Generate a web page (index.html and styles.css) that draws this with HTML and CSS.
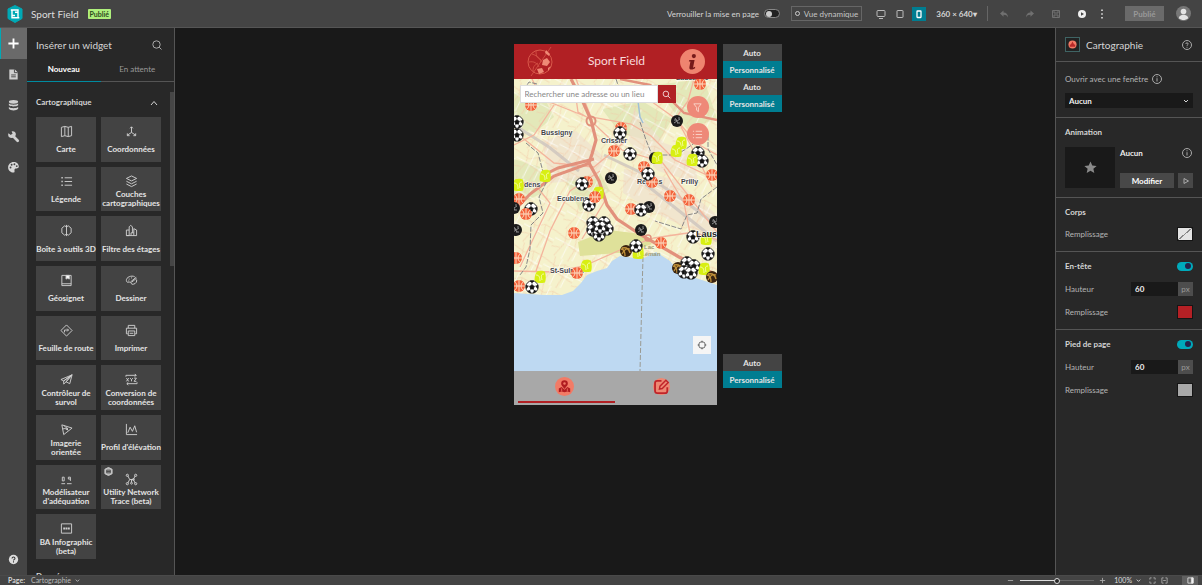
FILE: index.html
```html
<!DOCTYPE html>
<html lang="fr">
<head>
<meta charset="utf-8">
<title>Sport Field</title>
<link rel="stylesheet" href="styles.css">
</head>
<body>
<header class="topbar">
  <svg class="logo" viewBox="0 0 16 18"><path d="M8 0.5l7 3.5v9.500l-7 4-7-4V4z" fill="#00a9b5" stroke="#00a9b5" stroke-linejoin="round"/><path d="M3.800 5H11v4.500M12.300 12.800H5V8M5 5v5.500h3M11 12.800V7.300H8" fill="none" stroke="#fff" stroke-width="1.400"/></svg>
  <h1 class="app-name">Sport Field</h1>
  <span class="badge">Publié</span>
  <label class="lock">Verrouiller la mise en page<input class="switch switch-off" type="checkbox"></label>
  <button class="live"><span class="ring"></span>Vue dynamique</button>
  <div class="devices">
    <button class="tool" aria-label="Ordinateur"><svg viewBox="0 0 14 14"><rect x="3" y="3.500" width="8" height="6" rx="1"/><path d="M5 11.500h4"/></svg></button>
    <button class="tool" aria-label="Tablette"><svg viewBox="0 0 14 14"><rect x="4" y="3.500" width="6" height="7" rx="0.500"/></svg></button>
    <button class="tool tool-on" aria-label="Téléphone"><svg viewBox="0 0 14 14"><rect x="5" y="4" width="4" height="6.500" rx="0.500" stroke-width="1.300"/></svg></button>
  </div>
  <button class="size">360 × 640▾</button>
  <span class="divider"></span>
  <div class="actions">
    <button class="tool dim" aria-label="Annuler"><svg viewBox="0 0 14 14"><path class="solid" d="M3 6.500L6.500 3.500v2C9.500 5.500 11 7.500 11 10.500 10 8.500 9 7.800 6.500 7.800v2z"/></svg></button>
    <button class="tool dim" aria-label="Rétablir"><svg viewBox="0 0 14 14"><path class="solid" d="M11 6.500L7.500 3.500v2C4.500 5.500 3 7.500 3 10.500 4 8.500 5 7.800 7.500 7.800v2z"/></svg></button>
    <button class="tool dim" aria-label="Enregistrer"><svg viewBox="0 0 14 14"><path d="M3.500 3.500h7v7h-7zM5 3.500v2.500h4V3.500M5 10.500V8h4v2.500"/></svg></button>
    <button class="tool" aria-label="Aperçu"><svg viewBox="0 0 14 14"><circle cx="7" cy="7" r="4" fill="#f0f0f0" stroke="none"/><path d="M6 5.200v3.600L9 7z" fill="#444" stroke="none"/></svg></button>
  </div>
  <button class="tool more" aria-label="Plus"><svg viewBox="0 0 14 14"><path class="solid" d="M6.200 2.500h1.600v1.600H6.200zM6.200 6.200h1.600v1.600H6.200zM6.200 9.900h1.600v1.600H6.200z"/></svg></button>
  <button class="publish">Publié</button>
  <svg class="avatar" viewBox="0 0 16 16"><circle cx="8" cy="8" r="8" fill="#777"/><circle cx="8" cy="5.800" r="3" fill="#e4e4e4"/><path d="M3 13c0-5 10-5 10 0-3 2.500-7 2.500-10 0z" fill="#e4e4e4"/></svg>
</header>

<main class="workspace">
  <nav class="rail">
    <button class="rail-item rail-on" aria-label="Insérer"><svg viewBox="0 0 14 14"><path d="M7 1.500v11M1.500 7h11" stroke="#fff" stroke-width="2"/></svg></button>
    <button class="rail-item" aria-label="Page"><svg viewBox="0 0 14 14"><path d="M2.500 1.500h6l3 3v8h-9z" fill="#d0d0d0"/><path d="M8 1.500V5h3.500M4.500 7.500h5M4.500 9.500h5" fill="none" stroke="#444"/></svg></button>
    <button class="rail-item" aria-label="Données"><svg viewBox="0 0 14 14"><ellipse cx="7" cy="3" rx="5" ry="2" fill="#d0d0d0"/><path d="M2 4.800c2 1.700 8 1.700 10 0v2c-2 1.700-8 1.700-10 0zM2 8.600c2 1.700 8 1.700 10 0v2c-2 2.200-8 2.200-10 0z" fill="#d0d0d0"/></svg></button>
    <button class="rail-item" aria-label="Utilitaires"><svg viewBox="0 0 14 14"><path d="M6 6l5.500 5.500" stroke="#d0d0d0" stroke-width="3" stroke-linecap="round"/><path d="M1.500 3.500l2.700 1.800L6 4 5 1.500c3-.5 5 1.500 4.500 4-1.500 3.500-5 4-7.500 2-.8-1.500-.9-2.500-.5-4z" fill="#d0d0d0"/></svg></button>
    <button class="rail-item" aria-label="Thème"><svg viewBox="0 0 14 14"><path d="M7 1c3.500 0 5.700 2.200 5.700 5 0 2.500-3 2-4 2.300-1.500.7 0 2.500-.7 3.700C5 13.500 1.200 10.500 1.200 7S4 1 7 1z" fill="#d8d8d8"/><g fill="#444"><circle cx="3.800" cy="7" r="1"/><circle cx="5" cy="4" r="1"/><circle cx="8" cy="3.500" r="1"/><circle cx="10.500" cy="5.500" r="1"/></g></svg></button>
    <button class="rail-item rail-help" aria-label="Aide"><svg viewBox="0 0 14 14"><circle cx="7" cy="7" r="5" fill="#ddd"/><path d="M5.400 5.800c0-2 3.200-2 3.200 0 0 1.200-1.600 1-1.600 2.400M7 9v1.200" fill="none" stroke="#333" stroke-width="1.100"/></svg></button>
  </nav>

  <aside class="widgets">
    <div class="widgets-head"><h2 class="panel-title">Insérer un widget</h2>
      <button class="icon-btn" aria-label="Rechercher"><svg viewBox="0 0 12 12"><circle cx="5.500" cy="5.500" r="3.700"/><path d="M8.200 8.200L10.500 10.500"/></svg></button></div>
    <div class="tabs"><button class="tab tab-on">Nouveau</button><button class="tab">En attente</button></div>
    <div class="scroll">
      <span class="thumb"></span>
      <div class="group-head"><h3 class="group-title">Cartographique</h3><svg class="chevron" viewBox="0 0 10 10"><path d="M2 8l3-3.500L8 8"/></svg></div>
      <div class="cards">
        <button class="card"><svg viewBox="0 0 14 14"><path d="M1.500 2.500l3.700-1 3.700 1 3.600-1v10l-3.600 1-3.700-1-3.700 1zM5.200 1.500v10M8.900 2.500v10"/></svg><span>Carte</span></button>
        <button class="card"><svg viewBox="0 0 14 14"><path d="M7 8V2M5.500 3.500L7 2l1.500 1.500M7 8l-4.500 3M7 8l4.500 3M2.500 9v2.500H5M11.500 9v2.500H9"/></svg><span>Coordonnées</span></button>
        <button class="card"><svg viewBox="0 0 14 14"><path d="M5 3h8M5 7h8M5 11h8"/><path d="M1.500 3H3M1.500 7H3M1.500 11H3" stroke-width="1.600"/></svg><span>Légende</span></button>
        <button class="card"><svg viewBox="0 0 14 14"><path d="M7 1l5.500 2.700L7 6.400 1.500 3.700zM1.500 6.700L7 9.500l5.500-2.800M1.500 9.700L7 12.500l5.500-2.800"/></svg><span>Couches cartographiques</span></button>
        <button class="card"><svg viewBox="0 0 14 14"><path d="M5 2L2 4.500v5L5 12M9 2l3 2.500v5L9 12M7 1v12M5 2l2 1 2-1M5 12l2-1 2 1"/></svg><span>Boîte à outils 3D</span></button>
        <button class="card"><svg viewBox="0 0 14 14"><path d="M1.500 12.500v-6h3v6zM4.500 6.500V3L6 1.500 8 3v6.500M6.500 12.500v-3h3v3M9.500 9.500V5l3 1.500v6h-11"/></svg><span>Filtre des étages</span></button>
        <button class="card"><svg viewBox="0 0 14 14"><path d="M2 1.500h10v11H2zM2 10.500h10"/><path d="M6.500 1.500h3.500v4L8.200 4.500 6.500 5.500z" fill="#fff"/></svg><span>Géosignet</span></button>
        <button class="card"><svg viewBox="0 0 14 14"><path d="M10.500 3C7 1 1 3.500 1.500 7c.5 3.500 3 1 4.500 2s0 2.500 3 2 4-3 3.500-5M6 8.500l6-5M7 9l5.500-4.500"/><path d="M4 5.500h1M6.500 4.200h1M3.500 7.500h1"/></svg><span>Dessiner</span></button>
        <button class="card"><svg viewBox="0 0 14 14"><path d="M7 1l6 6-6 6-6-6zM4.800 9V6.500H9M7.700 5L9.200 6.500 7.700 8"/></svg><span>Feuille de route</span></button>
        <button class="card"><svg viewBox="0 0 14 14"><path d="M3.500 4.500v-3h7v3M3 10.500H1.500v-6h11v6H11M3.500 7.500h7v5h-7zM5 10h4"/></svg><span>Imprimer</span></button>
        <button class="card"><svg viewBox="0 0 14 14"><path d="M13 2L1 7l3 1.500zM13 2L4 8.500V12l2.500-2.500M13 2l-2.500 9.500-4-2zM13 2L6.500 9.500"/></svg><span>Contrôleur de survol</span></button>
        <button class="card"><svg viewBox="0 0 14 14"><path d="M1 4V2.500h11M10.500 1L12 2.500 10.500 4M13 10v1.500H2M3.500 10L2 11.500 3.500 13M1.500 5.500l2.500 3.500M4 5.500L1.500 9M5.500 5.500L7 7.200l1.500-1.700M7 7.200V9M9.800 5.500h2.500L9.800 9h2.500"/></svg><span>Conversion de coordonnées</span></button>
        <button class="card"><svg viewBox="0 0 14 14"><path d="M2 2l11 3.500L4 12.500zM3 6.500c2-1 3.500-.5 4.500 1M4.500 3c1.500 1 3 2.500 4 5M6 5.500h2v2"/></svg><span>Imagerie<br>orientée</span></button>
        <button class="card"><svg viewBox="0 0 14 14"><path d="M1.500 1v11.500H13M3 10.500l2.500-6L8 9l2.500-6 2 7"/></svg><span>Profil d'élévation</span></button>
        <button class="card"><svg viewBox="0 0 14 14"><path d="M1.500 11.500h4M7.500 11.500h5M2.500 4.500h2v4h-2zM9 6.500v-2h2.200v4M9 6.500h2.200"/></svg><span>Modélisateur d'adéquation</span></button>
        <button class="card"><svg class="mark" viewBox="0 0 10 10"><path d="M5 .5l4 2v5l-4 2-4-2v-5z" fill="#bbb"/><path d="M3 3.500h4v3H3zM3 5h4" stroke="#444"/></svg><svg viewBox="0 0 14 14"><path d="M3 3l2 4-2 4M5 7h4l2-4M9 7l2 4M7 7v3"/><g><circle cx="2.500" cy="2.500" r="1.200"/><circle cx="11.500" cy="2.500" r="1.200"/><circle cx="2.500" cy="11.500" r="1.200"/><circle cx="11.500" cy="11.500" r="1.200"/><circle cx="7" cy="11" r="1"/><circle cx="9" cy="7" r="1"/></g></svg><span>Utility Network Trace (beta)</span></button>
        <button class="card"><svg viewBox="0 0 14 14"><path d="M1.500 2h11v10h-11z"/><path d="M3.500 7h7" stroke-width="2.200" stroke-dasharray="2 .5"/></svg><span>BA Infographic (beta)</span></button>
      </div>
      <h3 class="group-title next-group">Données</h3>
    </div>
  </aside>

  <section class="canvas">
    <div class="phone">
      <div class="phone-head">
        <svg class="sport-logo" viewBox="0 0 28 32"><g fill="none" stroke="#d8584a"><circle cx="14" cy="16" r="12"/><path d="M5 30L25 1M6 8c6 2 9 5 9 8M3 16c5-1 8 1 10 5M10 5c0 5 1 7 5 9M7 25c0-5 2-6 5-8" stroke-width=".8"/></g><path d="M17 14l4-2 3 4-3 4-5-1zM20 4l4 4-1 2-4-3zM11 23l5-1 2 4-5 2zM22 22l3-2-3 5z" fill="#ef8a76"/></svg>
        <h2 class="phone-title">Sport Field</h2>
        <button class="info" aria-label="Informations"><svg viewBox="0 0 24 24"><circle cx="12" cy="12" r="12" fill="#ef8470"/><circle cx="13.300" cy="6.800" r="2" fill="#761a1a"/><path d="M9 10.500h5l-1.500 7.500 2-1v1.500c-3 2-6 1.500-5.500-1L10 12H8.500z" fill="#761a1a"/></svg></button>
      </div>
      <div class="map">
        <svg class="map-art" viewBox="0 0 203 292" preserveAspectRatio="xMidYMid slice">
          <defs>
            <pattern id="streets" width="34" height="29" patternUnits="userSpaceOnUse" patternTransform="rotate(24)"><path d="M0 6l12 3 8-5 14 2M8 0l3 13-5 16M20 4l3 12 11 2M11 13l12 3-2 13M0 21l8-2" fill="none" stroke="#f3c3a2" stroke-width=".8" opacity=".6"/><path d="M0 12l34 3M16 0l-2 29M27 5l-2 22" fill="none" stroke="#fff" stroke-width=".9" opacity=".7"/></pattern>
            <g id="soccer"><circle r="6.200" fill="#fff" stroke="#222" stroke-width=".9"/><path d="M0-2.200L2.200-.6 1.300 2h-2.600L-2.200-.6zM-1.800-6h3.600L0-4.300zM5.900-2L5.500 1.500 4-.8zM4.300 4.300L1.500 5.900 2.300 3.400zM-4.300 4.300L-1.500 5.900-2.300 3.400zM-5.900-2L-5.500 1.500-4-.8z" fill="#111" stroke="#111" stroke-width=".8"/><path d="M0-2v-2M2-.6l2-.5M1.300 2l1.200 2M-1.300 2l-1.200 2M-2-.6l-2-.5" stroke="#111" stroke-width=".5"/></g>
            <g id="basket"><circle r="6" fill="#f4633c"/><path d="M-6 0H6M0-6V6M-4.300-4.200c3 2.500 3 6 0 8.400M4.300-4.200c-3 2.500-3 6 0 8.400" fill="none" stroke="#fde7cc" stroke-width=".9"/></g>
            <g id="tennis"><path d="M-3-5.500C0-7 5-6 5-5c1 4 1 8 0 10.500C1 6.500-3 6-5 5c-1-3 0-8 2-10.500z" fill="#d8ef12"/><path d="M-4-2c3 0 4 2 4 6M4-3C1-3 1-1 2 3" fill="none" stroke="#fbffc8" stroke-width=".8"/></g>
            <g id="puck"><circle r="6" fill="#1b1b1b"/><path d="M-3 2l6-4M-3-1h3M0 2h3M-2-3l3 5M1-3h2" stroke="#999" stroke-width=".9"/></g>
            <g id="volley"><circle r="6" fill="#3a2410"/><path d="M-4-3c4-1 7 1 8 5M-4 3c2-4 5-6 8-5M-1 5c0-4-1-7-4-7" fill="none" stroke="#c0913a" stroke-width="1.300"/></g>
          </defs>
          <path d="M0 0h203v292H0z" fill="#f5f2cc"/>
          <path d="M0 14l30 4 10 20-20 16-20-6zM88 30l40-8 30 18-14 24-38-10zM140 6l50-6 13 40-30 10zM0 80l26 8 2 26-28 14zM50 100l36-6 10 18-30 20z" fill="#e3e8b9"/>
          <path d="M28 62l34-10 30 28-10 20-46 4zM110 90l50 10 43 36v24l-50-20-44-26zM120 30l30 34 30 10 4 30-40-12-30-30z" fill="#eeddcf" opacity=".6"/>
          <path d="M0 0h203v292H0z" fill="url(#streets)"/>
          <path d="M64 163l30-12 34 4 10 10-22 8-50 4z" fill="#dfe19a"/>
          <g fill="none" stroke="#c9c2bc" stroke-width="3" opacity=".75"><path d="M0 46l35 22 30 24M90 76l42 20 40 27 31 24M130 104l73 58"/></g>
          <g fill="none" stroke="#f4b49c" stroke-width="1.300"><path d="M0 192l40 1 30-6 36-16 34-12 40-6 23 8M62 0l7 18 8 20 40 7 20 12 24 24 42 20M78 41l-14-8-2-14M76 41l32 30 40 12 55 70M0 52l40 32 40 4 34-28M104 6l30 14 28 20 20 24 21 12M180 0l-6 22-10 14M0 104l20 0 16 20-30 64M86 92l-30 20-20 40-14 40M40 26l-20 30-20 10M92 120l-24 40M150 90l20 34 6 30M18 0l10 20 50 20M164 42l24 46 10 20"/></g>
          <g fill="none" stroke="#e2917c"><path d="M57 0l12 23 8 18 5 20-4 14-3 9 10 18 8 24 10 14 24 16 38 22 38 18" stroke-width="3.200"/><path d="M76 84l-36 13-24 18-16 17M80 80l-36 9-16 8" stroke-width="3"/><path d="M106 0l30 6 20 14 14 14 33 7" stroke-width="2.400"/><circle cx="77" cy="42" r="4.500" stroke-width="2"/><circle cx="134" cy="159" r="3" stroke-width="1.500"/></g>
          <path d="M23 5l-8-2-4 6M102 0l4 12-5 10M126 43l6 18 6 15 24 0 10-6 14-10 8-4 0 14 9 16M12 64l12 10 8 30-7 14 4 16-12 12-1 24-4 18-6 8M203 108l-16 12-4 14-10 2-6 14-26-8" fill="none" stroke="#888" stroke-width="1" stroke-dasharray="5 1.500"/>
          <path d="M124 22l2 16 3 6" fill="none" stroke="#9fc0d6" stroke-width="1.500"/>
          <path d="M0 214l30 2h18l11-4 8-8 6-8 10-4 10-3 5-7 8-5 22 3 14-7 14 9 10 12 22 7 15 5v87H0z" fill="#bed9f2"/>
          <path d="M129 178l-1 36-2 78" fill="none" stroke="#9a9a92" stroke-dasharray="5 2"/>
          <g class="towns"><text x="27" y="56">Bussigny</text><text x="87" y="64">Crissier</text><text x="10" y="108">dens</text><text x="43" y="122">Ecublens</text><text x="123" y="105">Renens</text><text x="167" y="105">Prilly</text><text x="36" y="194">St-Sulpice</text><text x="162" y="1">Lausanne</text><text class="soft" x="130" y="170">Lac</text><text class="soft" x="127" y="177">Léman</text></g>
          <use href="#soccer" x="3" y="43"/><use href="#soccer" x="3" y="56"/><use href="#basket" x="107" y="49"/><use href="#soccer" x="106" y="54"/><use href="#basket" x="186" y="5"/><use href="#basket" x="100" y="72"/><use href="#soccer" x="116" y="75"/><use href="#basket" x="17" y="26"/><use href="#puck" x="163" y="42"/><use href="#puck" x="141" y="79"/><use href="#tennis" x="143" y="79"/><use href="#tennis" x="167" y="64"/><use href="#tennis" x="162" y="72"/><use href="#soccer" x="184" y="74"/><use href="#soccer" x="188" y="82"/><use href="#tennis" x="178" y="81"/>
          <use href="#tennis" x="31" y="97"/><use href="#tennis" x="4" y="106"/><use href="#basket" x="73" y="103"/><use href="#soccer" x="68" y="105"/><use href="#puck" x="97" y="99"/><use href="#basket" x="130" y="88"/><use href="#basket" x="138" y="103"/><use href="#soccer" x="134" y="95"/><use href="#basket" x="198" y="96"/><use href="#basket" x="156" y="117"/><use href="#basket" x="175" y="121"/><use href="#basket" x="5" y="120"/><use href="#puck" x="0" y="129"/><use href="#soccer" x="17" y="130"/><use href="#basket" x="12" y="135"/><use href="#puck" x="2" y="151"/><use href="#soccer" x="75" y="126"/><use href="#tennis" x="84" y="114"/><use href="#basket" x="81" y="118"/>
          <use href="#soccer" x="79" y="144"/><use href="#soccer" x="90" y="144"/><use href="#soccer" x="93" y="150"/><use href="#soccer" x="79" y="151"/><use href="#soccer" x="85" y="156"/><use href="#soccer" x="86" y="148"/><use href="#basket" x="60" y="154"/><use href="#basket" x="117" y="130"/><use href="#puck" x="135" y="128"/><use href="#soccer" x="127" y="131"/><use href="#puck" x="127" y="151"/><use href="#basket" x="147" y="164"/><use href="#volley" x="112" y="172"/><use href="#tennis" x="124" y="174"/><use href="#soccer" x="122" y="167"/><use href="#puck" x="201" y="143"/><use href="#soccer" x="179" y="158"/><use href="#tennis" x="192" y="160"/><use href="#soccer" x="194" y="175"/><use href="#volley" x="164" y="189"/><use href="#soccer" x="173" y="184"/><use href="#soccer" x="180" y="187"/><use href="#soccer" x="170" y="193"/><use href="#soccer" x="177" y="194"/><use href="#tennis" x="190" y="190"/><use href="#volley" x="198" y="198"/>
          <use href="#basket" x="2" y="179"/><use href="#tennis" x="72" y="187"/><use href="#basket" x="63" y="194"/><use href="#tennis" x="26" y="198"/><use href="#basket" x="5" y="207"/><use href="#soccer" x="18" y="208"/>
          <g class="towns"><text class="city" x="182" y="158">Laus</text></g>
        </svg>
        <div class="map-search"><input class="map-input" type="text" aria-label="Rechercher" placeholder="Rechercher une adresse ou un lieu"><button class="map-go" aria-label="Lancer la recherche"><svg viewBox="0 0 12 12"><circle cx="5.200" cy="5.200" r="3.700"/><path d="M8 8l3 3"/></svg></button></div>
        <div class="map-tools">
          <button class="round" aria-label="Filtre"><svg viewBox="0 0 12 12"><path d="M2 2h8L7 6v4.500L5 9V6z"/></svg></button>
          <button class="round" aria-label="Légende"><svg viewBox="0 0 12 12"><path d="M4 2.500h7M4 6h7M4 9.500h7M1 2.500h1.300M1 6h1.300M1 9.500h1.300"/></svg></button>
        </div>
        <button class="locate" aria-label="Ma position"><svg viewBox="0 0 12 12"><circle cx="6" cy="6" r="4"/><path d="M6 .8v2.400M6 8.800v2.400M.8 6h2.400M8.800 6h2.400"/></svg></button>
      </div>
      <div class="phone-foot">
        <button class="foot-tab foot-on" aria-label="Carte"><svg viewBox="0 0 20 20"><circle cx="10" cy="10" r="10" fill="#f27b66"/><path d="M10 12.500C7.500 9.500 6.500 8.500 6.500 6.800a3.500 3.500 0 017 0c0 1.700-1 2.700-3.500 5.700z" fill="#b01c20"/><circle cx="10" cy="6.800" r="1.300" fill="#f27b66"/><path d="M4 12l3-1.500 3 3 3-3 3 1.500v4l-3-.8-3 .8-3-.8-3 .8z" fill="#b01c20"/><path d="M7 12v3M13 12v3" stroke="#f27b66" stroke-width=".8"/></svg></button>
        <button class="foot-tab" aria-label="Modifier"><svg viewBox="0 0 20 20"><circle cx="10" cy="10" r="9" fill="#ee8873"/><path d="M10 4H5.500a2.300 2.300 0 00-2.300 2.300v8.500A2.300 2.300 0 005.500 17h8.300a2.300 2.300 0 002.300-2.300v-4" fill="none" stroke="#c0242a" stroke-width="1.900"/><path d="M7.800 12.700l.6-3 6.200-6.300 2.500 2.500-6.300 6.200z" fill="#ee8873" stroke="#c0242a" stroke-width="1.500"/></svg></button>
      </div>
    </div>
    <div class="modes">
      <div class="mode-group"><button class="mode">Auto</button><button class="mode mode-on">Personnalisé</button><button class="mode">Auto</button><button class="mode mode-on">Personnalisé</button></div>
      <div class="mode-group"><button class="mode">Auto</button><button class="mode mode-on">Personnalisé</button></div>
    </div>
  </section>

  <aside class="settings">
    <div class="settings-head">
      <span class="page-icon"><svg viewBox="0 0 10 10"><circle cx="5" cy="5" r="4.500" fill="#f27b66"/><path d="M5 1.800L6.800 5H8v2.500H2V5h1.200z" fill="#b82a2a"/></svg></span>
      <h2 class="panel-title grow">Cartographie</h2>
      <button class="icon-btn" aria-label="Aide"><svg viewBox="0 0 12 12"><circle cx="6" cy="6" r="4.500"/><path d="M4.800 5c0-1.600 2.400-1.600 2.400 0 0 .8-1.200.7-1.200 1.800M6 7.800v.9"/></svg></button>
    </div>
    <div class="block">
      <div class="row row-start"><label class="label" for="open">Ouvrir avec une fenêtre</label><svg class="info-mark" viewBox="0 0 12 12"><circle cx="6" cy="6" r="4.500"/><path d="M6 5.200v3.300M6 3.300v1"/></svg></div>
      <div class="select-wrap"><select class="select" id="open"><option>Aucun</option></select><svg class="caret" viewBox="0 0 8 8"><path d="M2 3l2 2 2-2"/></svg></div>
    </div>
    <div class="block">
      <h3 class="sub">Animation</h3>
      <div class="anim">
        <div class="anim-thumb"><svg viewBox="0 0 14 14"><path d="M7 .5l1.900 4.300 4.700.5-3.500 3.100 1 4.600L7 10.600 2.900 13l1-4.600L.4 5.300l4.700-.5z" fill="#8a8a8a"/></svg></div>
        <div class="anim-side">
          <div class="row anim-name"><span>Aucun</span><svg class="info-mark" viewBox="0 0 12 12"><circle cx="6" cy="6" r="4.500"/><path d="M6 5.200v3.300M6 3.300v1"/></svg></div>
          <div class="anim-actions"><button class="btn grow">Modifier</button><button class="btn btn-play" aria-label="Lire"><svg viewBox="0 0 8 8"><path d="M2 1.500v5L6.500 4z"/></svg></button></div>
        </div>
      </div>
    </div>
    <div class="block">
      <h3 class="sub">Corps</h3>
      <div class="row line"><span class="label">Remplissage</span><button class="swatch swatch-none" aria-label="Remplissage du corps"></button></div>
    </div>
    <div class="block">
      <div class="row sub-row"><label class="sub" for="head-on">En-tête</label><input class="switch" id="head-on" type="checkbox" checked></div>
      <div class="row line"><label class="label" for="head-h">Hauteur</label><span class="num"><input class="num-input" id="head-h" type="text" value="60"><span class="unit">px</span></span></div>
      <div class="row line"><span class="label">Remplissage</span><button class="swatch swatch-red" aria-label="Remplissage de l'en-tête"></button></div>
    </div>
    <div class="block block-last">
      <div class="row sub-row"><label class="sub" for="foot-on">Pied de page</label><input class="switch" id="foot-on" type="checkbox" checked></div>
      <div class="row line"><label class="label" for="foot-h">Hauteur</label><span class="num"><input class="num-input" id="foot-h" type="text" value="60"><span class="unit">px</span></span></div>
      <div class="row line"><span class="label">Remplissage</span><button class="swatch swatch-grey" aria-label="Remplissage du pied de page"></button></div>
    </div>
  </aside>
</main>

<footer class="status">
  <span class="status-label">Page:</span>
  <button class="status-page">Cartographie<svg viewBox="0 0 8 8"><path d="M2 3l2 2 2-2"/></svg></button>
  <div class="zoom">
    <button class="mini" aria-label="Réduire"><svg viewBox="0 0 8 8"><path d="M1 4h6"/></svg></button>
    <input class="slider" type="range" aria-label="Zoom" min="0" max="100" value="50">
    <button class="mini" aria-label="Agrandir"><svg viewBox="0 0 8 8"><path d="M1 4h6M4 1v6"/></svg></button>
  </div>
  <button class="percent">100%<svg viewBox="0 0 8 8"><path d="M2 3l2 2 2-2"/></svg></button>
  <button class="mini" aria-label="Ajuster"><svg viewBox="0 0 8 8"><path d="M1 3V1h2M5 1h2v2M7 5v2H5M3 7H1V5"/></svg></button>
  <button class="mini" aria-label="Largeur"><svg viewBox="0 0 8 8"><path d="M3 1H1v6h2M5 1h2v6H5M2.500 4h3"/></svg></button>
  <button class="panel-toggle" aria-label="Volet"><svg viewBox="0 0 8 8"><path d="M1 1h6v6H1z"/><path d="M5 1h2v6H5z" fill="#fff"/></svg></button>
</footer>
</body>
</html>
```
FILE: styles.css
```css
* { box-sizing: border-box; }
body {
  margin: 0; height: 100vh; display: flex; flex-direction: column; overflow: hidden;
  background: #191919; color: #d5d5d5;
  font: 8px/10px Lato, "Open Sans", sans-serif;
}
h1, h2, h3 { margin: 0; font-size: 8px; font-weight: 400; }
button, input, select { font: inherit; color: inherit; margin: 0; padding: 0; border: 0; background: none; border-radius: 0; }
svg { display: block; fill: none; stroke: currentColor; flex: none; }
.solid { fill: currentColor; stroke: none; }
.grow { flex: 1; }

.topbar {
  flex: none; height: 28px; display: flex; align-items: center; padding: 0 11px 0 7px;
  background: #444; border-bottom: 1px solid #555;
}
.logo { width: 16px; height: 18px; stroke: none; }
.app-name { margin-left: 8px; font-size: 10px; line-height: 14px; color: #ddd; }
.badge { margin-left: 9px; width: 23px; background: #aef07c; color: #2b4a1c; border-radius: 1px; font-size: 7px; line-height: 10px; font-weight: 700; text-align: center; }
.lock { margin-left: auto; display: flex; align-items: center; gap: 5px; }
.live { margin-left: 11px; width: 71px; height: 15px; display: flex; align-items: center; justify-content: center; gap: 4px; border: 1px solid #666; color: #c5c5c5; }
.ring { width: 5px; height: 5px; border: 1px solid #ccc; border-radius: 50%; }
.devices { display: flex; gap: 5px; margin-left: 12px; }
.tool { width: 14px; height: 14px; flex: none; color: #bbb; }
.tool svg { width: 14px; height: 14px; }
.tool-on { background: #007d91; color: #fff; }
.size { margin-left: 9px; width: 43px; font-weight: 700; white-space: nowrap; }
.divider { width: 1px; height: 15px; margin: 0 9px; background: #666; }
.actions { display: flex; gap: 12px; }
.dim { color: #707070; }
.more { margin-left: 6px; color: #e0e0e0; }
.publish { margin-left: 16px; width: 39px; height: 15px; background: #6a6a6a; color: #999; font-weight: 700; }
.avatar { margin-left: 12px; width: 15px; height: 15px; stroke: none; }

.switch { appearance: none; flex: none; width: 16px; height: 9px; border-radius: 5px; background: #00aabb; display: flex; align-items: center; justify-content: flex-end; padding: 1px 2px; }
.switch::before { content: ""; width: 6px; height: 6px; border-radius: 50%; background: #23234b; }
.switch-off { background: #222; border: 1px solid #888; justify-content: flex-start; padding: 0 1px; }
.switch-off::before { background: #ccc; }

.workspace { flex: 1; min-height: 0; display: flex; }
.rail { width: 27px; flex: none; display: flex; flex-direction: column; background: #444; }
.rail-item { height: 31px; display: flex; align-items: center; justify-content: center; }
.rail-item svg { width: 13px; height: 13px; stroke: none; }
.rail-on { background: #6a6a6a; box-shadow: inset 1px 0 #00a9b5; }
.rail-help { margin-top: auto; }

.widgets { width: 148px; flex: none; display: flex; flex-direction: column; background: #282828; border-right: 1px solid #555; }
.widgets-head { height: 34px; flex: none; display: flex; align-items: center; justify-content: space-between; padding: 0 11px 0 9px; }
.panel-title { font-size: 10px; line-height: 12px; }
.icon-btn, .icon-btn svg { width: 12px; height: 12px; color: #aaa; }
.tabs { display: flex; flex: none; height: 20px; border-bottom: 1px solid #555; }
.tab { flex: 1; padding-bottom: 6px; color: #999; }
.tab-on { color: #fff; font-weight: 700; height: 20px; border-bottom: 1px solid #008ba0; }
.scroll { position: relative; flex: 1; min-height: 0; overflow: hidden; padding: 0 13px 0 9px; }
.thumb { position: absolute; top: 10px; right: 0; width: 4px; height: 174px; background: #464646; }
.group-head { height: 35px; display: flex; align-items: center; justify-content: space-between; padding: 4px 2px 0 0; }
.group-title { font-weight: 700; line-height: 10px; }
.chevron { width: 10px; height: 10px; }
.cards { display: grid; grid-template-columns: 1fr 1fr; grid-auto-rows: 1fr; gap: 5px; height: 442px; }
.card { position: relative; min-width: 0; background: #434343; display: flex; flex-direction: column; align-items: center; padding-top: 8px; color: #d0d0d0; }
.card svg { width: 13px; height: 13px; stroke-width: 1; }
.card span { flex: 1; display: flex; align-items: center; justify-content: center; line-height: 9px; font-weight: 700; color: #e4e4e4; margin: 0 -2px; }
.card .mark { position: absolute; top: 2px; left: 3px; width: 9px; height: 9px; }
.next-group { padding-top: 12px; }

.canvas { flex: 1; min-width: 0; display: grid; grid-template-columns: 1fr 203px 1fr; align-content: start; padding-top: 16px; column-gap: 6px; }
.phone { grid-column: 2; display: flex; flex-direction: column; }
.phone-head { height: 35px; display: flex; align-items: center; justify-content: space-between; padding: 0 12px; background: #b12024; color: #f8dada; }
.sport-logo { width: 28px; height: 32px; stroke: none; }
.phone-title { font-size: 12px; line-height: 16px; padding-bottom: 2px; }
.info, .info svg { width: 25px; height: 25px; stroke: none; }
.map { position: relative; height: 292px; }
.map-art { width: 100%; height: 100%; stroke: none; }
.towns { fill: #444; stroke: #fff; stroke-width: 1px; paint-order: stroke; font: 700 7px "Liberation Sans", sans-serif; }
.city { font-size: 9px; fill: #222; }
.soft { font-size: 6px; fill: #9b9b78; stroke: none; }
.map-search { position: absolute; top: 6px; left: 6px; display: flex; width: 156px; height: 18px; }
.map-input { flex: 1; min-width: 0; padding: 0 4px; background: #fff; border: 1px solid #ddd; color: #555; }
.map-input::placeholder { color: #888; opacity: 1; }
.map-go { width: 18px; background: #b12024; color: #fff; display: grid; place-items: center; }
.map-go svg { width: 9px; height: 9px; }
.map-tools { position: absolute; top: 17px; right: 8px; display: flex; flex-direction: column; gap: 5px; }
.round { width: 22px; height: 22px; border-radius: 50%; background: #ee8978; color: #fbd5cb; display: grid; place-items: center; }
.round svg { width: 11px; height: 11px; }
.locate { position: absolute; right: 6px; bottom: 17px; width: 18px; height: 18px; background: #f5f5f5; color: #555; display: grid; place-items: center; }
.locate svg { width: 10px; height: 10px; }
.phone-foot { height: 34px; display: grid; grid-template-columns: 1fr 1fr; padding: 0 4px 2px; background: #a8a8a8; }
.foot-tab { display: grid; place-items: center; padding-right: 4px; border-bottom: 2px solid transparent; }
.foot-on { border-color: #b12024; }
.foot-tab svg { width: 19px; height: 19px; stroke: none; }
.modes { display: flex; flex-direction: column; justify-content: space-between; width: 59px; padding-bottom: 17px; }
.mode-group { display: flex; flex-direction: column; }
.mode { height: 17px; background: #444; color: #e4e4e4; font-weight: 700; }
.mode-on { background: #007d91; }

.settings { width: 147px; flex: none; background: #282828; border-left: 1px solid #555; }
.settings-head { height: 34px; display: flex; align-items: center; gap: 6px; padding: 0 9px; border-bottom: 1px solid #555; }
.page-icon { width: 15px; height: 15px; border: 1px solid #3f6464; display: grid; place-items: center; background: #222; }
.page-icon svg { width: 9px; height: 9px; stroke: none; }
.block { padding: 8px 9px 6px; border-bottom: 1px solid #555; }
.block-last { border: 0; }
.row { display: flex; align-items: center; justify-content: space-between; }
.row-start { justify-content: flex-start; gap: 3px; height: 18px; }
.info-mark { width: 12px; height: 12px; color: #aaa; }
.label { color: #b4b4b4; }
.select-wrap { position: relative; margin: 5px 0 3px; }
.select { appearance: none; width: 100%; height: 15px; padding: 0 4px; background: #191919; color: #eee; font-weight: 700; display: block; }
.caret { position: absolute; right: 3px; top: 4px; width: 8px; height: 8px; pointer-events: none; }
.sub { font-weight: 700; line-height: 12px; }
.sub-row { height: 12px; }
.anim { display: flex; gap: 5px; padding: 9px 0 3px; }
.anim-thumb { width: 50px; height: 41px; background: #191919; display: grid; place-items: center; }
.anim-thumb svg { width: 13px; height: 13px; stroke: none; }
.anim-side { flex: 1; display: flex; flex-direction: column; justify-content: space-between; }
.anim-name { color: #eee; font-weight: 700; }
.anim-actions { display: flex; gap: 4px; }
.btn { height: 15px; background: #484848; color: #fff; font-weight: 700; }
.btn-play { width: 15px; display: grid; place-items: center; color: #aaa; }
.btn-play svg { width: 8px; height: 8px; }
.line { height: 23px; }
.sub + .line { margin-top: 4px; }
.sub-row + .line { margin-top: 5px; }
.swatch { width: 16px; height: 14px; border: 1px solid #151515; }
.swatch-none { background: linear-gradient(to top left, transparent 47%, #888 47% 53%, transparent 53%), #e4e4e4; }
.swatch-red { background: #b52025; }
.swatch-grey { background: #a8a8a8; }
.num { display: flex; width: 62px; height: 14px; }
.num-input { flex: 1; min-width: 0; padding: 0 4px; background: #191919; color: #eee; font-weight: 700; }
.unit { width: 15px; background: #4d4d4d; color: #999; text-align: center; line-height: 14px; }

.status { flex: none; height: 10px; display: flex; align-items: center; gap: 4px; padding: 0 4px 0 8px; background: #444; border-top: 1px solid #4a4a4a; font-size: 7px; line-height: 9px; }
.status svg { width: 7px; height: 7px; }
.status-label { font-weight: 700; margin-right: 2px; }
.status-page, .percent { display: flex; align-items: center; gap: 3px; color: #bbb; line-height: 9px; }
.zoom { margin-left: auto; display: flex; align-items: center; gap: 5px; }
.mini { width: 8px; color: #aaa; }
.slider { appearance: none; width: 74px; height: 1px; background: linear-gradient(90deg, #ddd 50%, #666 50%); }
.slider::-webkit-slider-thumb { appearance: none; width: 6px; height: 6px; border-radius: 50%; background: #282828; border: 1px solid #ddd; }
.percent { margin: 0 3px; color: #ddd; }
.panel-toggle { width: 16px; height: 9px; margin-left: 9px; background: #606060; display: grid; place-items: center; color: #ddd; }
```
